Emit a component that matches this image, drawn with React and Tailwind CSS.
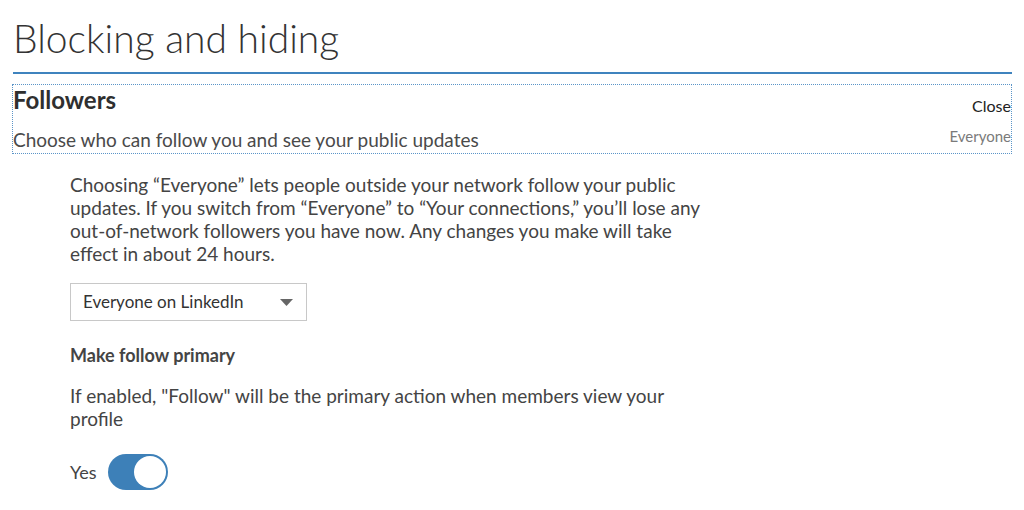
export default function App() {
  return (
    <div className="min-h-screen bg-white text-[#3a3a3a] font-['Lato','Liberation_Sans',sans-serif]">
      <div className="pl-[13px] pr-[12px]">
        <h1 className="pt-[14px] text-[39px] font-light leading-[48px] text-[#333]">Blocking and hiding</h1>
        <div className="mt-[10px] h-[2px] bg-[#3f83be]" />

        <div className="-ml-px mt-[10px] border border-dotted border-[#5b95c8] pb-px">
          <div className="flex items-start justify-between">
            <h2 className="text-[24px] font-bold leading-[30px] text-[#2f2f2f]">Followers</h2>
            <button className="mt-[11px] text-[16px] leading-[20px] text-[#222]">Close</button>
          </div>
          <div className="mt-[12px] flex items-end justify-between">
            <p className="text-[19px] leading-[24px] text-[#4a4a4a]">Choose who can follow you and see your public updates</p>
            <span className="mb-[8px] text-[15px] leading-[16px] text-[#7a7a7a]">Everyone</span>
          </div>
        </div>

        <div className="pl-[57px] pt-[19px]">
          <p className="max-w-[640px] text-[19px] leading-[23px] text-[#444]">
            Choosing “Everyone” lets people outside your network follow your public updates. If you switch from “Everyone” to “Your connections,” you’ll lose any out-of-network followers you have now. Any changes you make will take effect in about 24 hours.
          </p>

          <div className="mt-[18px] flex h-[38px] w-[237px] items-center justify-between border border-[#c8c8c8] pl-[12px] pr-[13px]">
            <span className="text-[17px] text-[#333]">Everyone on LinkedIn</span>
            <svg width="13" height="7" viewBox="0 0 13 7">
              <path d="M0 0h13L6.5 7z" fill="#666" />
            </svg>
          </div>

          <h3 className="mt-[23px] text-[18px] font-bold leading-[22px] text-[#444]">Make follow primary</h3>

          <p className="mt-[18px] max-w-[640px] text-[19px] leading-[23px] text-[#444]">
            If enabled, "Follow" will be the primary action when members view your profile
          </p>

          <div className="mt-[24px] flex items-center gap-[11px]">
            <span className="text-[18px] text-[#444]">Yes</span>
            <div className="flex h-[36px] w-[60px] items-center justify-end rounded-full bg-[#3d80b8] p-[2px]">
              <div className="h-[32px] w-[32px] rounded-full bg-white" />
            </div>
          </div>
        </div>
      </div>
    </div>
  )
}
